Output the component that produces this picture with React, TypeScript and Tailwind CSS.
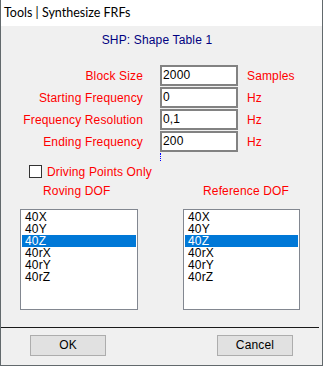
import React from "react";

const rows = [
  { label: "Block Size", value: "2000", unit: "Samples" },
  { label: "Starting Frequency", value: "0", unit: "Hz" },
  { label: "Frequency Resolution", value: "0,1", unit: "Hz" },
  { label: "Ending Frequency", value: "200", unit: "Hz" },
];

const dofs = ["40X", "40Y", "40Z", "40rX", "40rY", "40rZ"];

function DofList({ width, selected }: { width: string; selected: string }) {
  return (
    <div className={`${width} h-[101px] border border-[#828790] bg-white pt-[1px] px-[1px]`}>
      {dofs.map(d => (
        <div
          key={d}
          className={
            "h-[12px] leading-[12px] pl-[3px] " +
            (d === selected ? "bg-[#0078d7] text-white" : "text-black")
          }
        >
          {d}
        </div>
      ))}
    </div>
  );
}

export default function App() {
  return (
    <div className="w-[323px] h-[366px] flex flex-col border-x border-b border-[#62696c] bg-[#f0f0f0] font-['Liberation_Sans',Arial,sans-serif] text-[12px] tracking-[0.15px]">
      {/* title bar */}
      <div className="h-[26px] bg-white pl-[3px] leading-[26px] font-['Lato',sans-serif] text-[12.5px] tracking-normal text-black">
        Tools | Synthesize FRFs
      </div>

      <div className="mt-[7px] h-[14px] leading-[14px] text-center text-[#000080] pr-[9px]">
        SHP: Shape Table 1
      </div>

      {/* parameter rows */}
      <div className="mt-[18px] flex flex-col gap-[1px]">
        {rows.map(r => (
          <div key={r.label} className="flex items-center h-[21px]">
            <div className="w-[142px] text-right text-[#ff0000] leading-[14px]">{r.label}</div>
            <div className="ml-[17px] w-[78px] h-[21px] border-2 border-[#828282] bg-white pl-[1px] leading-[17px] text-black">
              {r.value}
            </div>
            <div className="ml-[9px] text-[#ff0000] leading-[14px]">{r.unit}</div>
          </div>
        ))}
      </div>

      <div className="h-[13px]">
        <div className="ml-[159px] mt-[1px] h-[8px] w-0 border-l border-dotted border-[#0000ff]" />
      </div>

      {/* checkbox */}
      <div className="flex items-center h-[13px] pl-[28px]">
        <div className="w-[13px] h-[13px] border border-[#333333] bg-white" />
        <div className="ml-[5px] text-[#ff0000] leading-[14px]">Driving Points Only</div>
      </div>

      <div className="mt-[6px] flex h-[14px] leading-[14px] text-[#ff0000]">
        <div className="ml-[42px] w-[118px]">Roving DOF</div>
        <div className="ml-[42px]">Reference DOF</div>
      </div>

      <div className="mt-[11px] flex">
        <div className="ml-[19px]">
          <DofList width="w-[118px]" selected="40Z" />
        </div>
        <div className="ml-[45px]">
          <DofList width="w-[117px]" selected="40Z" />
        </div>
      </div>

      <div className="mt-[17px] h-[1px] w-[318px] bg-[#1a1a1a]" />

      <div className="mt-[7px] flex">
        <button className="ml-[29px] w-[76px] h-[21px] border border-[#adadad] bg-[#e1e1e1] text-black leading-[19px]">
          OK
        </button>
        <button className="ml-[111px] w-[76px] h-[21px] border border-[#adadad] bg-[#e1e1e1] text-black leading-[19px]">
          Cancel
        </button>
      </div>
    </div>
  );
}
